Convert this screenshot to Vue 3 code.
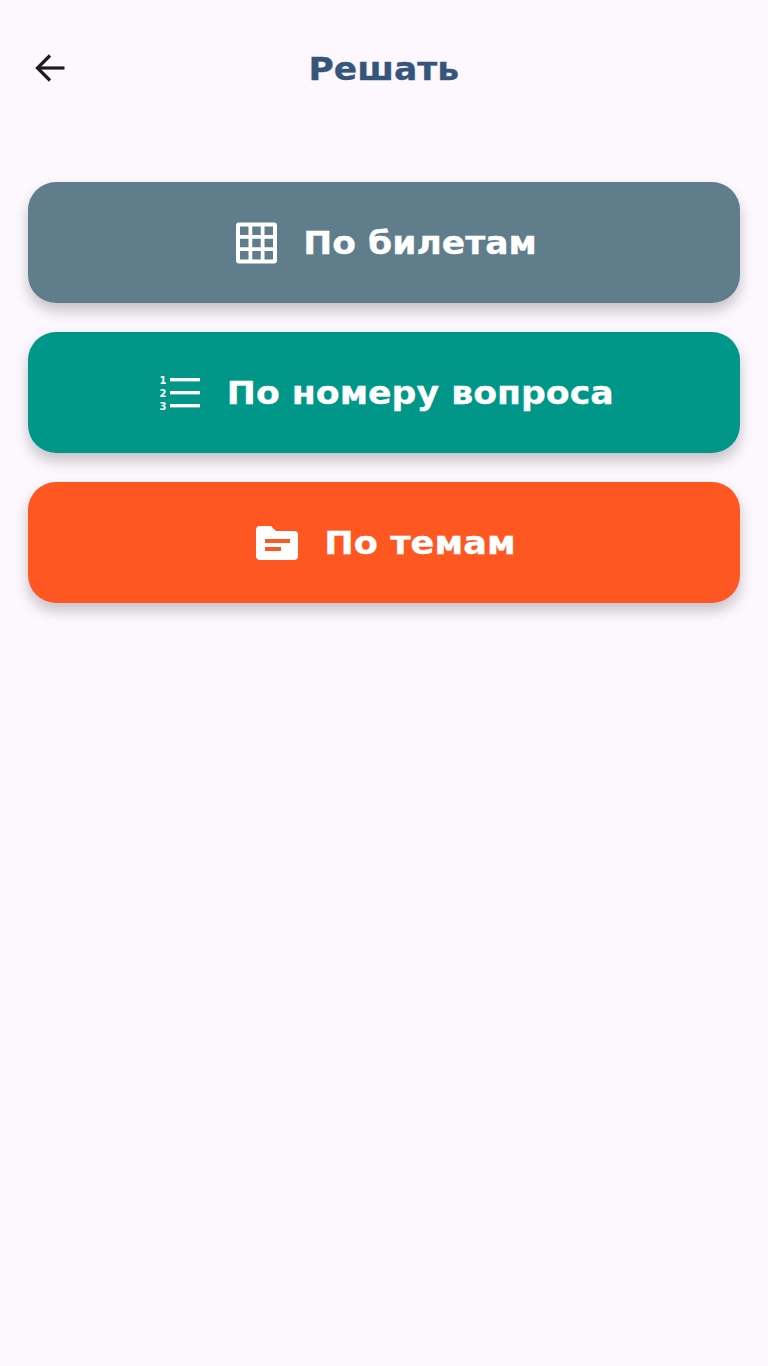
<template>
  <div class="page">
    <header class="top-bar">
      <button class="back" aria-label="Назад">
        <svg width="32" height="32" viewBox="0 0 32 32" fill="none" stroke="#1d1b20" stroke-width="3.2">
          <path d="M30.5 16H3.5" />
          <path d="M16 3.5 3.5 16 16 28.5" />
        </svg>
      </button>
      <h1 class="title">Решать</h1>
    </header>

    <main class="menu">
      <button v-for="item in items" :key="item.label" class="menu-btn" :style="{ backgroundColor: item.color }">
        <svg v-if="item.icon === 'grid'" class="icon icon-grid" width="41" height="42" viewBox="0 0 41 42" fill="#fff">
          <path
            fill-rule="evenodd"
            d="M3 .5h35a3 3 0 0 1 3 3v35a3 3 0 0 1-3 3H3a3 3 0 0 1-3-3v-35a3 3 0 0 1 3-3ZM4 4.500V13h8.500V4.500H4Zm12.250 0V13h8.500V4.500h-8.500Zm12.250 0V13H37V4.500h-8.500ZM4 16.750v8.500h8.500v-8.500H4Zm12.250 0v8.500h8.500v-8.500h-8.500Zm12.250 0v8.500H37v-8.500h-8.500ZM4 29v8.500h8.500V29H4Zm12.250 0v8.500h8.500V29h-8.500Zm12.250 0v8.500H37V29h-8.500Z"
          />
        </svg>
        <svg v-else-if="item.icon === 'list'" class="icon" width="42" height="36" viewBox="0 0 42 36" fill="#fff">
          <text x="0.500" y="9" class="num">1</text>
          <text x="0.500" y="22" class="num">2</text>
          <text x="0.500" y="35" class="num">3</text>
          <rect x="11" y="3" width="30" height="3.4" />
          <rect x="11" y="16" width="30" height="3.4" />
          <rect x="11" y="29" width="30" height="3.4" />
        </svg>
        <svg v-else class="icon icon-folder" width="42" height="34" viewBox="0 0 42 34" fill="#fff">
          <path
            fill-rule="evenodd"
            d="M4 0h11l5 5h18a4 4 0 0 1 4 4v21a4 4 0 0 1-4 4H4a4 4 0 0 1-4-4V4a4 4 0 0 1 4-4Zm5 13v4h25v-4H9Zm0 8v4h16v-4H9Z"
          />
        </svg>
        <span class="label" :style="{ margin: `0 ${item.side}px`, transform: `scaleX(${item.scale})` }">{{ item.label }}</span>
      </button>
    </main>
  </div>
</template>

<script setup>
// side = half of the width the stretched label gains, so the row stays centred
const items = [
  { label: "По билетам", color: "#607d8b", icon: "grid", scale: 1.08, side: 8.6 },
  { label: "По номеру вопроса", color: "#009688", icon: "list", scale: 1.085, side: 14.2 },
  { label: "По темам", color: "#ff5722", icon: "folder", scale: 1.1, side: 8.6 },
];
</script>

<style>
html,
body {
  background: #fdf8fe;
}
</style>

<style scoped>
.page {
  min-height: 1366px;
  background: #fdf8fe;
  font-family: "DejaVu Sans", sans-serif;
}

.top-bar {
  position: relative;
  display: flex;
  align-items: center;
  justify-content: center;
  height: 136px;
}

.back {
  position: absolute;
  left: 34px;
  top: 52px;
  display: flex;
  padding: 0;
  border: 0;
  background: none;
}

.title {
  margin: 0;
  padding-top: 2px;
  font-size: 32px;
  font-weight: 700;
  color: #36557a;
  transform: scaleX(1.08);
  -webkit-text-stroke: 0.3px #36557a;
}

.menu {
  display: flex;
  flex-direction: column;
  gap: 29px;
  padding: 46px 28px 0;
}

.menu-btn {
  display: flex;
  align-items: center;
  justify-content: center;
  gap: 27px;
  height: 121px;
  padding: 0 0 0 3px;
  border: 0;
  border-radius: 28px;
  color: #fff;
  font-family: inherit;
  font-size: 32px;
  font-weight: 700;
  box-shadow: 0 8px 14px rgba(0, 0, 0, 0.22);
}

.label {
  display: inline-block;
  -webkit-text-stroke: 0.3px #fff;
}

.icon {
  flex: none;
}

.icon-grid {
  margin-left: 2px;
  margin-right: -1px;
}

.icon-folder {
  margin-left: 1px;
  margin-right: -1px;
}

.num {
  font-family: "DejaVu Sans", sans-serif;
  font-size: 10px;
  font-weight: 700;
}
</style>
